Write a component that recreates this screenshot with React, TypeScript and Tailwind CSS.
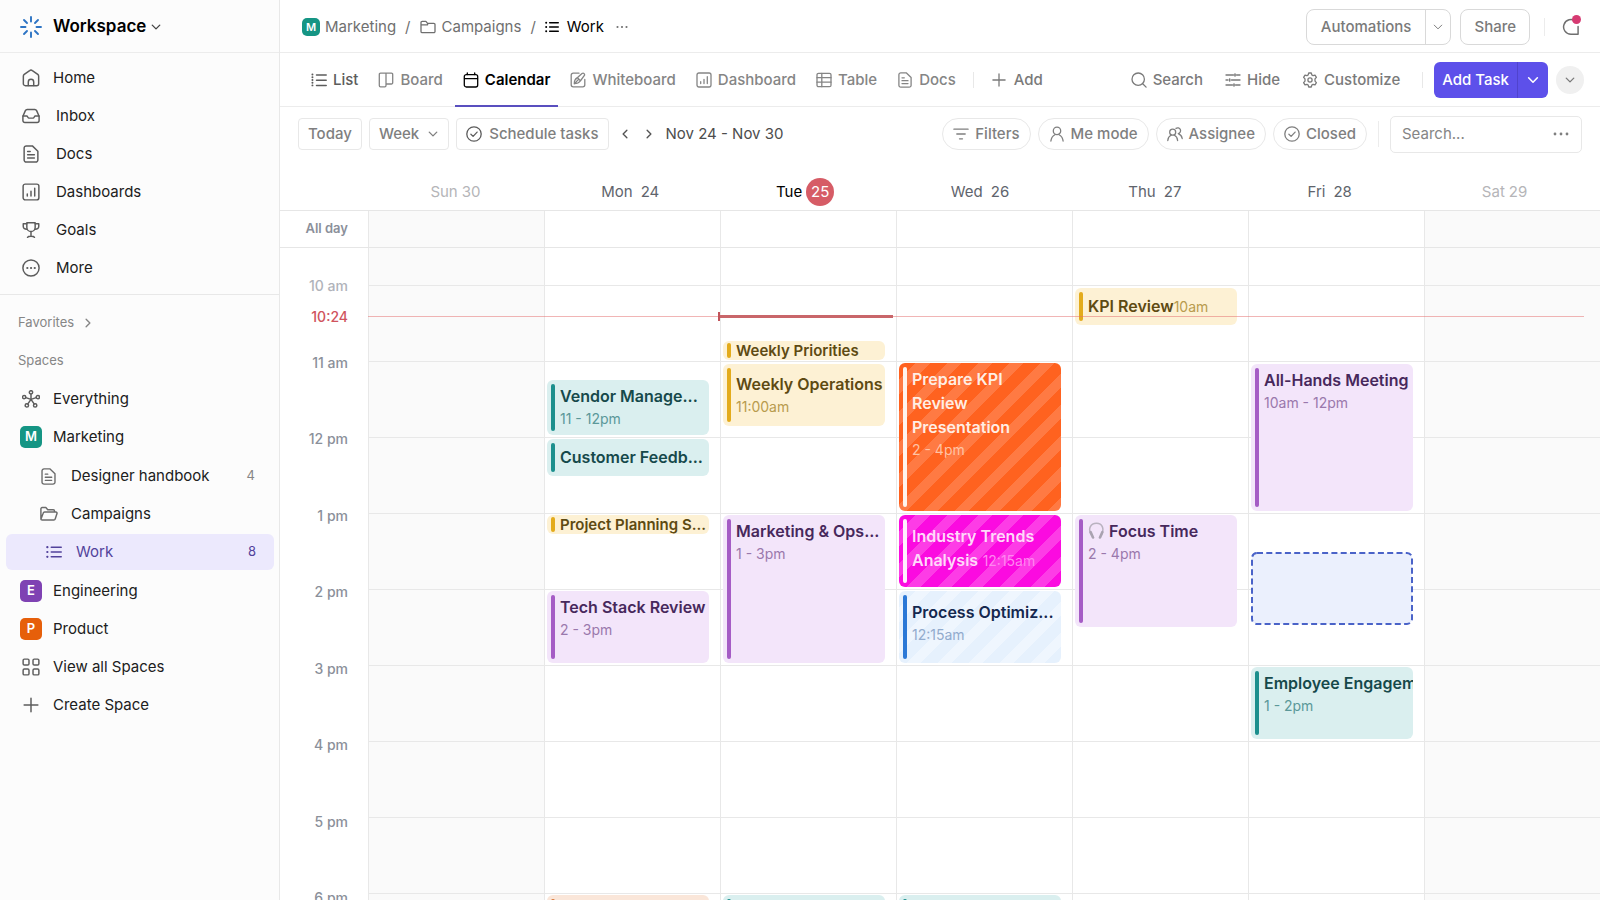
import type { ReactNode } from 'react'

type IconProps = { className?: string; children: ReactNode; box?: number; stroke?: number }

function Svg({ className = 'size-4', children, box = 16, stroke = 1.3 }: IconProps) {
    return (
        <svg
            className={`shrink-0 ${className}`}
            viewBox={`0 0 ${box} ${box}`}
            fill="none"
            stroke="currentColor"
            strokeWidth={stroke}
            strokeLinecap="round"
            strokeLinejoin="round"
            aria-hidden="true"
        >
            {children}
        </svg>
    )
}

const icons: Record<string, ReactNode> = {
    home: (
        <>
            <path d="M1.2 6.4a2 2 0 0 1 .8-1.6l4.8-3.4a2 2 0 0 1 2.4 0L14 4.8a2 2 0 0 1 .8 1.6v6.6a1.8 1.8 0 0 1-1.8 1.8H3a1.8 1.8 0 0 1-1.8-1.8z" />
            <path d="M5.6 14.6v-3a2.4 2.4 0 0 1 4.8 0v3" />
        </>
    ),
    inbox: (
        <>
            <path d="M.8 8.2 3 3.2a1.8 1.8 0 0 1 1.6-1h6.8a1.8 1.8 0 0 1 1.6 1l2.2 5v3.8a1.8 1.8 0 0 1-1.8 1.8H2.6A1.8 1.8 0 0 1 .8 12z" />
            <path d="M.9 8h3.3c.9 0 .9 1.9 2 1.9h3.6c1.1 0 1.1-1.9 2-1.9h3.3" />
        </>
    ),
    doc: (
        <>
            <path d="M1.9 2.7A1.9 1.9 0 0 1 3.8.8h5.4l4.9 4.7v7.8a1.9 1.9 0 0 1-1.9 1.9H3.8a1.9 1.9 0 0 1-1.9-1.9z" />
            <path d="M5 5.8h2.3M5 8.7h6M5 11.6h6" />
        </>
    ),
    chart: (
        <>
            <rect x="1" y="1" width="14" height="14" rx="1.9" />
            <path d="M4.7 11.5V9.7M8 11.5V7.3M11.3 11.5V4.7" />
        </>
    ),
    goal: (
        <>
            <path d="M4.3 1.5h7.4v4.2a3.7 3.7 0 0 1-7.4 0z" />
            <path d="M4.3 2.5H1.1v2.2c0 1.7 1.3 2.6 3.3 2.6M11.7 2.5h3.2v2.2c0 1.7-1.3 2.6-3.3 2.6M8 9.5v4M4.9 14.5c.7-1.3 5.5-1.3 6.2 0" />
        </>
    ),
    more: (
        <>
            <circle cx="8" cy="8" r="7.2" />
            <path d="M4.7 8h.1M8 8h.1M11.3 8h.1" strokeWidth="1.9" />
        </>
    ),
    everything: (
        <>
            <circle cx="8" cy="2.1" r="1.5" />
            <circle cx="1.9" cy="6.3" r="1.5" />
            <circle cx="14.1" cy="6.3" r="1.5" />
            <circle cx="4.3" cy="13.7" r="1.5" />
            <circle cx="11.7" cy="13.7" r="1.5" />
            <path d="M8 3.7v4.6M3.4 6.8 8 8.3l4.6-1.5M5.2 12.4 8 8.3l2.8 4.1" />
        </>
    ),
    folder: (
        <path d="M1 3.5a1.2 1.2 0 0 1 1.2-1.2h3.7l1.7 2.1h6.2A1.2 1.2 0 0 1 15 5.600v6.900a1.200 1.200 0 0 1-1.200 1.200H2.200A1.200 1.200 0 0 1 1 12.500zM1 5.800h6.600V4.400" />
    ),
    folderOpen: (
        <path d="M.8 12.600V3.400a1.100 1.100 0 0 1 1.100-1.100h3.300l1.700 1.900h4.900a1.100 1.100 0 0 1 1.100 1.100v1M.8 12.600l2-5.300a1.400 1.400 0 0 1 1.300-1h10a1 1 0 0 1 1 1.300l-1.600 4.900a1.300 1.300 0 0 1-1.200.9H1.900a1.100 1.100 0 0 1-1.100-1.100z" />
    ),
    list: (
        <>
            <path d="M5.3 3.2h9.9M5.3 8h9.9M5.3 12.8h9.9" strokeWidth="1.6" />
            <path d="M1.3 3.2h.1M1.3 8h.1M1.3 12.8h.1" strokeWidth="2.2" />
        </>
    ),
    listTall: (
        <>
            <path d="M5.5 3h9.7M5.5 8.2h9.7M5.5 13.4h9.7" strokeWidth="1.5" />
            <path d="M1.4 2.5h.1M1.4 8h.1M1.4 13.4h.1M1.4 5.2h.1M1.4 10.7h.1" strokeWidth="1.9" />
        </>
    ),
    grid: (
        <>
            <rect x="1" y="1" width="5.2" height="5.2" rx="1.1" />
            <rect x="9.8" y="1" width="5.2" height="5.2" rx="1.1" />
            <rect x="1" y="9.8" width="5.2" height="5.2" rx="1.1" />
            <rect x="9.8" y="9.8" width="5.2" height="5.2" rx="1.1" />
        </>
    ),
    plus: <path d="M8 1.9v12.2M1.9 8h12.2" />,
    board: (
        <path d="M1.3 2.4a1.2 1.2 0 0 1 1.2-1.2h11a1.2 1.2 0 0 1 1.2 1.2v8.4a1.2 1.2 0 0 1-1.2 1.2H8V1.2v12.4a1.2 1.2 0 0 1-1.2 1.2H2.5a1.2 1.2 0 0 1-1.2-1.2z" />
    ),
    calendar: (
        <>
            <rect x="1.3" y="2.6" width="13.4" height="12.4" rx="2" />
            <path d="M1.5 6.7h13M4.3.9v1.7M11.7.9v1.7" />
        </>
    ),
    whiteboard: (
        <>
            <path d="M9 1.2H3.2a2 2 0 0 0-2 2v9.6a2 2 0 0 0 2 2h9.6a2 2 0 0 0 2-2V7.5" />
            <path d="M4.3 11.7c0-3 .9-4.7 2.7-5.8l5-4.3c1.5-1.2 3.3.6 2.2 2.1L10.3 9c-1.2 1.8-3 2.7-6 2.7zl4-4.1M7.5 5.7l2.9 3" />
        </>
    ),
    table: (
        <>
            <rect x="1" y="1.3" width="14" height="13.4" rx="1.5" />
            <path d="M1 5.7h14M1 10.2h14M5.8 1.3v13.4" />
        </>
    ),
    search: (
        <>
            <circle cx="7.2" cy="7.2" r="6.2" />
            <path d="m11.7 11.7 3.4 3.4" />
        </>
    ),
    sliders: (
        <>
            <path d="M1 3h7.5M11.5 3H15M1 8h2M6.5 8H15M1 13h6.5M10.5 13H15" />
            <path d="M10 2v2M4.7 7v2M9 12v2" strokeWidth="1.6" />
        </>
    ),
    gear: (
        <>
            <path d="M6.7 1h2.6l.5 1.9 1.3.8 1.9-.6 1.4 2.3L13 6.9v2.2l1.4 1.5-1.4 2.3-1.9-.6-1.3.8-.5 1.9H6.7l-.5-1.9-1.3-.8-1.9.6-1.4-2.3L3 9.1V6.9L1.6 5.4 3 3.1l1.9.6 1.3-.8z" />
            <circle cx="8" cy="8" r="2.1" />
        </>
    ),
    check: (
        <>
            <circle cx="8" cy="8" r="7.2" />
            <path d="m4.9 8.3 2.2 2.1 4-4.3" />
        </>
    ),
    filter: <path d="M.9 3.2h14.2M3.8 8h8.4M6.5 12.8h3" />,
    user: (
        <>
            <circle cx="8" cy="4.9" r="3.7" />
            <path d="M1.9 15c.3-3.1 2-5.2 4-6.3M14.1 15c-.3-3.1-2-5.2-4-6.3" />
        </>
    ),
    users: (
        <>
            <circle cx="5.7" cy="6.2" r="3" />
            <path d="M.8 14.5c.2-2.6 1.5-4.3 3.2-5.2M10.6 14.5c-.2-2.6-1.5-4.3-3.2-5.2M9 2.4a2.9 2.9 0 1 1 2.3 5.2c2.2.9 3.5 2.5 3.9 4.9" />
        </>
    ),
    chat: <path d="M12.2 2.8A6.6 6.6 0 1 0 8 14.5h6.3V7.5" />,
    chevronDown: <path d="m3 5.5 5 5 5-5" />,
    chevronLeft: <path d="m10.5 3-5 5 5 5" />,
    chevronRight: <path d="m5.5 3 5 5-5 5" />,
    dots: (
        <g fill="currentColor" stroke="none">
            <circle cx="2" cy="8" r="1.4" />
            <circle cx="8" cy="8" r="1.4" />
            <circle cx="14" cy="8" r="1.4" />
        </g>
    ),
}

function Icon({ name, className, stroke }: { name: string; className?: string; stroke?: number }) {
    return (
        <Svg className={className} stroke={stroke}>
            {icons[name]}
        </Svg>
    )
}

function Logo() {
    return (
        <Svg className="size-[22px] text-[#2d74c4]" box={22} stroke={1.9}>
            <path d="M11 1v4.5M11 16.5V21M1 11h4.5M16.5 11H21" />
            <path d="m4 4 3 3M15 15l3 3M18 4l-3 3M7 15l-3 3" />
        </Svg>
    )
}

function Badge({ letter, color, className = 'size-[22px] text-[13px]' }: { letter: string; color: string; className?: string }) {
    return (
        <span className={`flex shrink-0 items-center justify-center rounded-[5px] font-semibold text-white ${color} ${className}`}>
            {letter}
        </span>
    )
}

const navItems = [
    { icon: 'home', label: 'Home', gap: 'gap-[13px]' },
    { icon: 'inbox', label: 'Inbox', gap: 'gap-4' },
    { icon: 'doc', label: 'Docs', gap: 'gap-4' },
    { icon: 'chart', label: 'Dashboards', gap: 'gap-4' },
    { icon: 'goal', label: 'Goals', gap: 'gap-4' },
    { icon: 'more', label: 'More', gap: 'gap-4' },
]

function SideLink({ children, className = '' }: { children: ReactNode; className?: string }) {
    return (
        <a href="#" className={`flex h-[38px] items-center ${className}`}>
            {children}
        </a>
    )
}

function Sidebar() {
    return (
        <aside className="flex w-[280px] shrink-0 flex-col border-r border-[#e8e8e8] bg-[#fcfcfc] text-[15px] text-[#202020]">
            <button className="flex h-[53px] shrink-0 items-center border-b border-[#ececec] pt-0.5 pl-5 text-[17px] font-semibold text-black">
                <Logo />
                <span className="ml-[11px]">Workspace</span>
                <Icon name="chevronDown" className="ml-1 size-3 text-[#444]" stroke={1.8} />
            </button>

            <nav className="flex flex-col border-b border-[#e8e8e8] pt-[6px] pb-[7px]">
                {navItems.map((item) => (
                    <SideLink key={item.label} className={`pl-[22px] ${item.gap}`}>
                        <Icon name={item.icon} className="size-[18px] text-[#5c5c5c]" />
                        {item.label}
                    </SideLink>
                ))}
            </nav>

            <div className="flex flex-col pt-[9px]">
                <button className="flex h-[38px] items-center gap-2 pl-[18px] text-[13px] text-[#868686]">
                    Favorites
                    <Icon name="chevronRight" className="size-3" stroke={1.8} />
                </button>
                <h2 className="flex h-[38px] items-center pl-[18px] text-[13px] text-[#868686]">Spaces</h2>

                <SideLink className="gap-[13px] pl-[22px]">
                    <Icon name="everything" className="size-[18px] text-[#5c5c5c]" />
                    Everything
                </SideLink>
                <SideLink className="gap-[11px] pl-5">
                    <Badge letter="M" color="bg-[#159584]" />
                    Marketing
                </SideLink>
                <div className="flex flex-col py-px">
                    <SideLink className="pr-6 pl-10">
                        <Icon name="doc" className="size-[17px] text-[#6b6b6b]" />
                        <span className="ml-[14px]">Designer handbook</span>
                        <span className="ml-auto text-[13px] text-[#868686]">4</span>
                    </SideLink>
                    <SideLink className="pl-10">
                        <Icon name="folderOpen" className="size-[18px] text-[#6b6b6b]" />
                        <span className="ml-[13px]">Campaigns</span>
                    </SideLink>
                    <SideLink className="pr-[5px] pl-[6px] text-[#52429b]">
                        <span className="flex h-9 flex-1 items-center rounded-md bg-[#ece9fd] pr-[18px] pl-10">
                            <Icon name="list" className="size-4" />
                            <span className="ml-[14px]">Work</span>
                            <span className="ml-auto text-[13px]">8</span>
                        </span>
                    </SideLink>
                </div>
                <SideLink className="gap-[11px] pl-5">
                    <Badge letter="E" color="bg-[#7f42b3]" />
                    Engineering
                </SideLink>
                <SideLink className="gap-[11px] pl-5">
                    <Badge letter="P" color="bg-[#e65f0a]" />
                    Product
                </SideLink>
                <SideLink className="gap-[13px] pl-[22px]">
                    <Icon name="grid" className="size-[18px] text-[#5c5c5c]" />
                    View all Spaces
                </SideLink>
                <SideLink className="gap-[13px] pl-[22px]">
                    <Icon name="plus" className="size-[18px] text-[#5c5c5c]" />
                    Create Space
                </SideLink>
            </div>
        </aside>
    )
}

function TopBar() {
    return (
        <header className="flex h-[53px] items-center border-b border-[#ececec] pt-0.5 pr-5 pl-[22px] text-[15px] text-[#6f6f6f]">
            <a href="#" className="flex items-center gap-[5px]">
                <Badge letter="M" color="bg-[#159584]" className="size-[18px] text-[11px]" />
                Marketing
            </a>
            <span className="mx-[9px]">/</span>
            <a href="#" className="flex items-center gap-[6px]">
                <Icon name="folder" />
                Campaigns
            </a>
            <span className="mx-[9px]">/</span>
            <a href="#" className="flex items-center gap-2 text-black">
                <Icon name="list" className="size-[14px]" />
                Work
            </a>
            <button aria-label="More options" className="ml-3">
                <Icon name="dots" className="size-3" />
            </button>

            <div className="ml-auto flex h-9 rounded-lg border border-[#d9d9d9] font-medium text-[#7a7a7a]">
                <button className="px-[14px]">Automations</button>
                <button aria-label="Automation options" className="border-l border-[#d9d9d9] px-[6px]">
                    <Icon name="chevronDown" className="size-3" />
                </button>
            </div>
            <button className="ml-[9px] h-9 rounded-lg border border-[#d9d9d9] px-[13px] font-medium text-[#7a7a7a]">Share</button>
            <span className="ml-[14px] h-[18px] w-px bg-[#ececec]" />
            <button aria-label="Notifications" className="relative ml-[17px]">
                <Icon name="chat" className="size-[18px]" />
                <span className="absolute -top-[3px] -right-px size-[9px] rounded-full bg-[#d63a72]" />
            </button>
        </header>
    )
}

const views = [
    { icon: 'listTall', label: 'List', color: 'text-[#5c5c5c] font-medium' },
    { icon: 'board', label: 'Board', color: 'text-[#858585] font-medium' },
    { icon: 'calendar', label: 'Calendar', color: 'text-black font-semibold' },
    { icon: 'whiteboard', label: 'Whiteboard', color: 'text-[#858585] font-medium' },
    { icon: 'chart', label: 'Dashboard', color: 'text-[#858585] font-medium' },
    { icon: 'table', label: 'Table', color: 'text-[#858585] font-medium' },
    { icon: 'doc', label: 'Docs', color: 'text-[#858585] font-medium' },
]

function ViewBar() {
    return (
        <div className="flex h-[54px] items-center border-b border-[#ececec] pt-px pr-4 pl-[23px] text-[15px] font-medium text-[#7a7a7a]">
            <nav className="flex h-full gap-1">
                {views.map((view) => (
                    <a key={view.label} href="#" className={`relative flex h-full items-center gap-[6px] px-2 ${view.color}`}>
                        <Icon name={view.icon} />
                        {view.label}
                        {view.label === 'Calendar' && <span className="absolute inset-x-0 -bottom-px h-[2px] bg-[#594fbf]" />}
                    </a>
                ))}
            </nav>
            <span className="mx-[9px] h-4 w-px bg-[#e8e8e8]" />
            <button className="flex items-center gap-[7px] px-2">
                <Icon name="plus" />
                Add
            </button>

            <div className="ml-auto flex items-center gap-[22px]">
                <button className="flex items-center gap-[6px]">
                    <Icon name="search" />
                    Search
                </button>
                <button className="flex items-center gap-[6px]">
                    <Icon name="sliders" />
                    Hide
                </button>
                <button className="flex items-center gap-[6px]">
                    <Icon name="gear" />
                    Customize
                </button>
                <span className="h-4 w-px bg-[#e8e8e8]" />
            </div>
            <div className="ml-[11px] flex h-9 rounded-md bg-[#5d50ea] text-white">
                <button className="px-2">Add Task</button>
                <button aria-label="More task types" className="border-l border-[#5043cd] px-2">
                    <Icon name="chevronDown" className="size-[14px]" stroke={1.8} />
                </button>
            </div>
            <button aria-label="Collapse header" className="ml-2 flex size-7 items-center justify-center rounded-full bg-[#f0f0f0]">
                <Icon name="chevronDown" className="size-3" stroke={1.8} />
            </button>
        </div>
    )
}

const filters = [
    { icon: 'filter', label: 'Filters' },
    { icon: 'user', label: 'Me mode' },
    { icon: 'users', label: 'Assignee' },
    { icon: 'check', label: 'Closed' },
]

function Toolbar() {
    return (
        <div className="flex h-[54px] items-center pr-[18px] pl-[18px] text-[15px] text-[#7f7f7f]">
            <div className="flex gap-[7px] font-medium">
                <button className="h-8 rounded border border-[#e8e8e8] px-[9px]">Today</button>
                <button className="flex h-8 items-center gap-2 rounded border border-[#e8e8e8] px-[9px]">
                    Week
                    <Icon name="chevronDown" className="size-3" stroke={1.8} />
                </button>
                <button className="flex h-8 items-center gap-[7px] rounded border border-[#e8e8e8] px-[9px]">
                    <Icon name="check" className="size-4 text-[#5c5c5c]" />
                    Schedule tasks
                </button>
            </div>
            <button aria-label="Previous week" className="ml-1 p-[6px] text-[#555]">
                <Icon name="chevronLeft" className="size-3" stroke={1.8} />
            </button>
            <button aria-label="Next week" className="p-[6px] text-[#555]">
                <Icon name="chevronRight" className="size-3" stroke={1.8} />
            </button>
            <span className="ml-[5px] text-[#4d4d4d]">Nov 24 - Nov 30</span>

            <div className="ml-auto flex gap-[7px] font-medium">
                {filters.map((filter) => (
                    <button key={filter.label} className="flex h-8 items-center gap-[6px] rounded-full border border-[#e8e8e8] px-[10px]">
                        <Icon name={filter.icon} />
                        {filter.label}
                    </button>
                ))}
            </div>
            <span className="mx-[11px] h-[26px] w-px bg-[#ececec]" />
            <div className="flex h-[37px] w-[192px] items-center rounded-[5px] border border-[#e8e8e8] pr-3 pl-[11px]">
                <input type="text" aria-label="Search tasks" placeholder="Search..." className="min-w-0 flex-1 outline-none placeholder:text-[#858585]" />
                <button aria-label="Search options">
                    <Icon name="dots" />
                </button>
            </div>
        </div>
    )
}

type CalendarEvent = {
    title: string
    time?: string
    inline?: boolean
    wrap?: boolean
    icon?: boolean
    tone: string
    top: number
    height: number
    pad?: string
}

const tones: Record<string, { box: string; bar: string; title: string; time: string }> = {
    teal: { box: 'bg-[#daefef]', bar: 'bg-[#1c8f8d]', title: 'text-[#16494b]', time: 'text-[#5b9899]' },
    yellow: { box: 'bg-[#fdf1d4]', bar: 'bg-[#e3ab1c]', title: 'text-[#5e4a12]', time: 'text-[#b89b4d]' },
    purple: { box: 'bg-[#f3e5fa]', bar: 'bg-[#a55cc5]', title: 'text-[#47285c]', time: 'text-[#9a78ac]' },
    peach: { box: 'bg-[#fae6d9]', bar: 'bg-[#d9783a]', title: 'text-[#5e3012]', time: 'text-[#b8804d]' },
    orange: {
        box: 'bg-[repeating-linear-gradient(135deg,#ff621f_0_12px,#ff7a43_12px_22px)]',
        bar: 'bg-[#fff4ee]',
        title: 'text-[#ffeee4]',
        time: 'text-[#ffc3a5]',
    },
    magenta: {
        box: 'bg-[repeating-linear-gradient(135deg,#fb0be0_0_12px,#fd3ce6_12px_22px)]',
        bar: 'bg-[#fff0fd]',
        title: 'text-[#ffd9fa]',
        time: 'text-[#ff86f0]',
    },
    blue: {
        box: 'bg-[repeating-linear-gradient(135deg,#e6f1fd_0_12px,#eff6fe_12px_22px)]',
        bar: 'bg-[#2b78d6]',
        title: 'text-[#14284f]',
        time: 'text-[#92abcd]',
    },
}

const days: { name: string; date: number; state?: string; events: CalendarEvent[] }[] = [
    { name: 'Sun', date: 30, state: 'off', events: [] },
    {
        name: 'Mon',
        date: 24,
        events: [
            { title: 'Vendor Manage...', time: '11 - 12pm', tone: 'teal', top: 132, height: 55 },
            { title: 'Customer Feedb...', tone: 'teal', top: 191, height: 37, pad: 'pt-[6px]' },
            { title: 'Project Planning S...', tone: 'yellow', top: 267, height: 19 },
            { title: 'Tech Stack Review', time: '2 - 3pm', tone: 'purple', top: 343, height: 72 },
            { title: '', tone: 'peach', top: 647, height: 72 },
        ],
    },
    {
        name: 'Tue',
        date: 25,
        state: 'today',
        events: [
            { title: 'Weekly Priorities', tone: 'yellow', top: 93, height: 19 },
            { title: 'Weekly Operations', time: '11:00am', tone: 'yellow', top: 116, height: 62, pad: 'pt-2' },
            { title: 'Marketing & Ops...', time: '1 - 3pm', tone: 'purple', top: 267, height: 148 },
            { title: '', tone: 'teal', top: 647, height: 72 },
        ],
    },
    {
        name: 'Wed',
        date: 26,
        events: [
            { title: 'Prepare KPI Review Presentation', time: '2 - 4pm', wrap: true, tone: 'orange', top: 115, height: 148 },
            { title: 'Industry Trends Analysis', time: '12:15am', inline: true, wrap: true, tone: 'magenta', top: 267, height: 72, pad: 'pt-[9px]' },
            { title: 'Process Optimiz...', time: '12:15am', tone: 'blue', top: 343, height: 72, pad: 'pt-[9px]' },
            { title: '', tone: 'teal', top: 647, height: 72 },
        ],
    },
    {
        name: 'Thu',
        date: 27,
        events: [
            { title: 'KPI Review', time: '10am', inline: true, tone: 'yellow', top: 40, height: 37, pad: 'pt-[6px]' },
            { title: 'Focus Time', icon: true, time: '2 - 4pm', tone: 'purple', top: 267, height: 112 },
        ],
    },
    {
        name: 'Fri',
        date: 28,
        events: [
            { title: 'All-Hands Meeting', time: '10am - 12pm', tone: 'purple', top: 116, height: 147 },
            { title: '', tone: 'slot', top: 304, height: 73 },
            { title: 'Employee Engagem', time: '1 - 2pm', tone: 'teal', top: 419, height: 72 },
        ],
    },
    { name: 'Sat', date: 29, state: 'off', events: [] },
]

const hours = ['10 am', '11 am', '12 pm', '1 pm', '2 pm', '3 pm', '4 pm', '5 pm', '6 pm']

function Headphones() {
    return (
        <svg className="mr-1 inline size-[17px] align-[-2px]" viewBox="0 0 17 17" fill="none" aria-hidden="true">
            <path d="M3.5 13C-.5 7 2.5 1.2 8.5 1.2S16.5 7 13.5 13" stroke="#b9b3c0" strokeWidth="1.5" />
            <path d="M2.7 10.2 5 15.5M14.3 10.2 12 15.5" stroke="#a9a2b0" strokeWidth="2.6" strokeLinecap="round" />
        </svg>
    )
}

function EventCard({ event }: { event: CalendarEvent }) {
    const place = { top: event.top, height: event.height }
    if (event.tone === 'slot') {
        return (
            <div className="absolute right-[11px] left-[2px]" style={place}>
                <svg className="size-full overflow-visible" aria-hidden="true">
                    <rect
                        x="1"
                        y="1"
                        rx="5"
                        className="h-[calc(100%-2px)] w-[calc(100%-2px)] fill-[#ebf0fd] stroke-[#4a63c8]"
                        strokeWidth="2"
                        strokeDasharray="6 3.3"
                    />
                </svg>
            </div>
        )
    }
    const tone = tones[event.tone]
    const slim = event.height < 20
    return (
        <div className={`absolute right-[11px] left-[2px] overflow-hidden rounded-md ${tone.box}`} style={place}>
            <span className={`absolute left-1 w-1 rounded-full ${slim ? 'inset-y-[2px]' : 'inset-y-1'} ${tone.bar}`} />
            <div className={`pl-[13px] ${slim ? '' : event.pad ?? 'pt-1'} ${event.wrap ? 'pr-4' : 'whitespace-nowrap'}`}>
                <span
                    className={`font-semibold ${slim ? 'text-[15px] leading-[19px]' : 'text-base leading-6'} ${
                        event.inline ? '' : 'block'
                    } ${tone.title}`}
                >
                    {event.icon && <Headphones />}
                    {event.title}
                </span>
                {event.inline && event.wrap && ' '}
                {event.time && (
                    <span className={`text-sm ${event.inline ? '' : 'block leading-[22px]'} ${tone.time}`}>{event.time}</span>
                )}
            </div>
        </div>
    )
}

function Calendar() {
    return (
        <section className="flex min-h-0 flex-1 flex-col overflow-hidden">
            <div className="flex h-[50px] shrink-0 border-b border-[#e6e6e6]">
                <div className="w-[88px] shrink-0" />
                <div className="mr-2 grid flex-1 grid-cols-7 text-[15px]">
                    {days.map((day) => (
                        <div
                            key={day.name}
                            className={`flex items-center justify-center pt-[13px] ${
                                day.state === 'off' ? 'gap-1 text-[#b5b5b8]' : day.state === 'today' ? 'gap-1 text-black' : 'gap-2 text-[#60646c]'
                            }`}
                        >
                            {day.name}
                            {day.state === 'today' ? (
                                <span className="flex size-7 items-center justify-center rounded-full bg-[#d65c66] text-white">{day.date}</span>
                            ) : (
                                <span>{day.date}</span>
                            )}
                        </div>
                    ))}
                </div>
            </div>

            <div className="flex h-[37px] shrink-0 border-b border-[#e6e6e6]">
                <div className="flex w-[88px] shrink-0 items-center justify-end pr-5 text-[13px] font-semibold text-[#8b909a]">All day</div>
                <div className="grid flex-1 grid-cols-7">
                    {days.map((day) => (
                        <div key={day.name} className={`border-l border-[#e8e8e8] ${day.state === 'off' ? 'bg-[#fafafa]' : ''}`} />
                    ))}
                </div>
            </div>

            <div className="flex">
                <div className="relative w-[88px] shrink-0 pt-[28px] pr-5 text-right text-sm font-medium text-[#8b909a]">
                    <div className="flex h-[632px] flex-col justify-between">
                        {hours.map((hour) => (
                            <span key={hour} className={hour === '10 am' ? 'text-[#b0b3ba]' : ''}>
                                {hour}
                            </span>
                        ))}
                    </div>
                    <span className="absolute top-[59px] right-5 text-[#d0545d]">10:24</span>
                </div>
                <div className="relative grid flex-1 grid-cols-7">
                    {days.map((day) => (
                        <div key={day.name} className={`relative border-l border-[#e8e8e8] ${day.state === 'off' ? 'bg-[#fafafa]' : ''}`}>
                            <div className="h-[38px] border-b border-[#e8e8e8]" />
                            {hours.map((hour) => (
                                <div key={hour} className="h-[76px] border-b border-[#e8e8e8]" />
                            ))}
                            {day.events.map((event) => (
                                <EventCard key={event.top} event={event} />
                            ))}
                            {day.state === 'today' && (
                                <div className="absolute top-[64px] right-[3px] -left-[3px] z-10 flex h-[9px] items-center">
                                    <span className="h-full w-[2px] bg-[#c2545a]" />
                                    <span className="h-[3px] flex-1 bg-[#c9666a]" />
                                </div>
                            )}
                        </div>
                    ))}
                    <div className="absolute top-[68px] right-4 left-0 h-px bg-[#e36c6c]/50" />
                </div>
            </div>
        </section>
    )
}

export default function App() {
    return (
        <div className="flex h-screen overflow-hidden bg-white font-['Inter',sans-serif]">
            <Sidebar />
            <main className="flex min-w-0 flex-1 flex-col">
                <TopBar />
                <ViewBar />
                <Toolbar />
                <Calendar />
            </main>
        </div>
    )
}
